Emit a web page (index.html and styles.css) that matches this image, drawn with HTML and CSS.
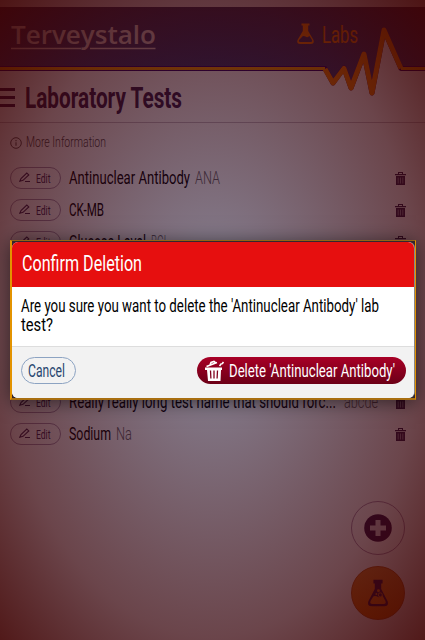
FILE: index.html
```html
<!DOCTYPE html>
<html lang="en">
<head>
<meta charset="utf-8">
<title>Laboratory Tests</title>
<link rel="stylesheet" href="styles.css">
</head>
<body>
<svg width="0" height="0" class="defs">
  <symbol id="pencil" viewBox="0 0 12 12"><path d="M.8 9.200 2 6.500 7.800 1 9.800 2.900 4 8.300 .8 9.200ZM6 9.500H11" fill="none" stroke="#3c2a58" stroke-width="1.100"/></symbol>
  <symbol id="trash" viewBox="0 0 11 13"><path d="M0 2h11v1.300H0zM3 0h5v2H7V1H4v1H3z" fill="#33204c"/><path d="M1 4h9v9H1z" fill="#33204c"/><path d="M3.200 5.500v6M5.500 5.500v6M7.800 5.500v6" stroke="#9a8ea6" stroke-width=".9"/></symbol>
</svg>
<div class="page">
  <header class="top">
    <svg class="banner" viewBox="0 0 425 100">
      <defs><linearGradient id="hg" x1="0" y1="0" x2="0" y2="1"><stop offset="0" stop-color="#383058"/><stop offset="1" stop-color="#344080"/></linearGradient></defs>
      <path d="M0 7H425V69H401L384 30 372 93 364 54 351 88 344 68 333 83 325 69H0Z" fill="url(#hg)"/>
      <path class="pulse-edge" d="M-5 68.500H325L333 83 344 68 351 88 364 54 372 93 384 30 401 68.500H430"/>
      <path class="pulse-line" d="M-5 68.500H325"/>
      <path class="pulse" d="M325 69 333 83 344 68.500 351 88 364 54 372 93 384 30 401 68.500"/>
      <path class="pulse-line" d="M401 68.500H430"/>
      <text class="logo" x="11" y="43.500" textLength="145" lengthAdjust="spacingAndGlyphs">Terveystalo</text>
      <path d="M11 48.500H81M90 48.500H155.500" stroke="#d9c8c8" stroke-width="1.300"/>
      <path d="M301.500 23.500h8v2h-1.300v5.500l5.300 9q1.300 4-3 4h-10q-4.300 0-3-4l5.300-9v-5.500h-1.300zM299 40q-.8 2 1 2h11q1.800 0 1-2l-2.500-4q-2 2-4 .5-3-1.500-4 1z" fill="#f47c00" fill-rule="evenodd"/>
      <text class="labs" x="322" y="43" textLength="36" lengthAdjust="spacingAndGlyphs">Labs</text>
    </svg>
  </header>
  <div class="title">
    <div class="burger"><i></i><i></i><i></i></div>
    <svg class="h1"><text x="0" y="25" textLength="157" lengthAdjust="spacingAndGlyphs">Laboratory Tests</text></svg>
  </div>
  <div class="more">
    <svg width="12" height="12" viewBox="0 0 12 12"><circle cx="6" cy="6" r="5.300" fill="none" stroke="#555" stroke-width="1"/><path d="M6 5.200v3.600M6 3v1.200" stroke="#555" stroke-width="1.100"/></svg>
    <svg class="t" width="80"><text x="0" y="14" textLength="80" lengthAdjust="spacingAndGlyphs">More Information</text></svg>
  </div>
  <ul class="list">
    <li><span class="edit"><svg class="pen"><use href="#pencil"/></svg><svg class="t" width="15"><text x="0" y="15" textLength="14.500" lengthAdjust="spacingAndGlyphs">Edit</text></svg></span>
      <svg class="t name" width="121"><text x="0" y="16" textLength="121" lengthAdjust="spacingAndGlyphs">Antinuclear Antibody</text></svg><svg class="t abbr" width="25"><text x="0" y="16" textLength="25" lengthAdjust="spacingAndGlyphs">ANA</text></svg><svg class="bin"><use href="#trash"/></svg></li>
    <li><span class="edit"><svg class="pen"><use href="#pencil"/></svg><svg class="t" width="15"><text x="0" y="15" textLength="14.500" lengthAdjust="spacingAndGlyphs">Edit</text></svg></span>
      <svg class="t name" width="35"><text x="0" y="16" textLength="35" lengthAdjust="spacingAndGlyphs">CK-MB</text></svg><svg class="bin"><use href="#trash"/></svg></li>
    <li><span class="edit"><svg class="pen"><use href="#pencil"/></svg><svg class="t" width="15"><text x="0" y="15" textLength="14.500" lengthAdjust="spacingAndGlyphs">Edit</text></svg></span>
      <svg class="t name" width="77"><text x="0" y="16" textLength="77" lengthAdjust="spacingAndGlyphs">Glucose Level</text></svg><svg class="t abbr" width="18"><text x="0" y="16" textLength="18" lengthAdjust="spacingAndGlyphs">BGL</text></svg><svg class="bin"><use href="#trash"/></svg></li>
    <li class="later"><span class="edit"><svg class="pen"><use href="#pencil"/></svg><svg class="t" width="15"><text x="0" y="15" textLength="14.500" lengthAdjust="spacingAndGlyphs">Edit</text></svg></span>
      <svg class="t name" width="268"><text x="0" y="16" textLength="267" lengthAdjust="spacingAndGlyphs">Really really long test name that should forc...</text></svg><svg class="t abbr wide" width="34"><text x="0" y="16" textLength="34" lengthAdjust="spacingAndGlyphs">abcde</text></svg><svg class="bin"><use href="#trash"/></svg></li>
    <li><span class="edit"><svg class="pen"><use href="#pencil"/></svg><svg class="t" width="15"><text x="0" y="15" textLength="14.500" lengthAdjust="spacingAndGlyphs">Edit</text></svg></span>
      <svg class="t name" width="42"><text x="0" y="16" textLength="42" lengthAdjust="spacingAndGlyphs">Sodium</text></svg><svg class="t abbr" width="16"><text x="0" y="16" textLength="16" lengthAdjust="spacingAndGlyphs">Na</text></svg><svg class="bin"><use href="#trash"/></svg></li>
  </ul>
  <div class="fabs">
    <div class="fab"><svg width="28" height="28" viewBox="0 0 28 28"><circle cx="14" cy="14" r="13.800" fill="#33184c"/><path d="M14 6v16M6 14h16" stroke="#d6ccd8" stroke-width="5"/></svg></div>
    <div class="fab orange"><svg width="22" height="29" viewBox="0 0 24 30"><path d="M7 0h10v4h-1.500v6l7 13.500q2 5.500-4 5.500h-13q-6 0-4-5.500l7-13.500v-6H7zM4 23q-1.500 3.500 2 3.500h12q3.500 0 2-3.500l-3.300-6q-3 3.500-6 1-3-1-4 .5z" fill="#33184c" fill-rule="evenodd"/><circle cx="14.500" cy="16.500" r="2.200" fill="#33184c" stroke="#d87a20"/><circle cx="12.500" cy="12" r="1.600" fill="#d87a20"/><circle cx="10.200" cy="15.500" r="1" fill="#d87a20"/></svg></div>
  </div>
</div>
<div class="overlay">
  <div class="focus">
    <div class="dialog">
      <div class="head"><svg class="t" width="120"><text x="0" y="15" textLength="120" lengthAdjust="spacingAndGlyphs">Confirm Deletion</text></svg></div>
      <div class="body">
        <svg class="line" width="358"><text x="0" y="15" textLength="358" lengthAdjust="spacingAndGlyphs">Are you sure you want to delete the 'Antinuclear Antibody' lab</text></svg>
        <svg class="line" width="32"><text x="0" y="15" textLength="32" lengthAdjust="spacingAndGlyphs">test?</text></svg>
      </div>
      <div class="foot">
        <button class="cancel"><svg class="t" width="37"><text x="0" y="15" textLength="37" lengthAdjust="spacingAndGlyphs">Cancel</text></svg></button>
        <button class="delete">
          <svg class="icon" width="20" height="20" viewBox="0 0 20 20"><path d="M0 6.500h17v2.500h-1L15.500 20H3L2 9H0z" fill="#fff"/><path d="M5.500 9.500l.4 8M9 9.500v8M12.500 9.500l-.4 8" stroke="#80001d" stroke-width="1.300"/><path d="M1.500 5.500 12 1.500M5 4 6 1.500l3-1 1.500 1.200M14.500 5l2-2.500M17 3l1.500-2" stroke="#fff" stroke-width="1.600" fill="none"/></svg>
          <svg class="t" width="166"><text x="0" y="15" textLength="166" lengthAdjust="spacingAndGlyphs">Delete 'Antinuclear Antibody'</text></svg>
        </button>
      </div>
    </div>
  </div>
</div>
</body>
</html>
```
FILE: styles.css
```css
* { box-sizing: border-box; }
body { margin: 0; width: 425px; height: 640px; overflow: hidden; font-family: Roboto, "Liberation Sans", sans-serif; }
svg { display: block; overflow: visible; flex: none; }
.defs { position: absolute; }
.page { height: 640px; background: #fff; display: flex; flex-direction: column; }
.top { height: 72px; background: linear-gradient(#d8ccd0 7px, #fff 7px); }
.banner { width: 425px; height: 100px; }
.pulse-edge { fill: none; stroke: #2a0070; stroke-width: 5; stroke-linejoin: round; }
.pulse-line { fill: none; stroke: #f9a000; stroke-width: 3; }
.pulse { fill: none; stroke: #f98700; stroke-width: 5; stroke-linejoin: round; }
.logo { font: 600 26px "Open Sans", sans-serif; fill: #d9c8c8; }
.labs { font-size: 24px; fill: #f47c00; }
.title { height: 51px; display: flex; border-bottom: 1px solid #c4bcc6; padding-top: 11px; }
.burger { width: 15px; padding-top: 5px; display: flex; flex-direction: column; gap: 5px; }
.burger i { height: 3px; background: #33184c; }
.h1 { width: 160px; height: 30px; margin-left: 10px; font-weight: 700; font-size: 29px; fill: #33204c; }
.more { height: 39px; display: flex; align-items: center; padding-left: 10px; gap: 4px; font-size: 15px; font-weight: 300; fill: #444; }
.t { height: 20px; }
.list { list-style: none; margin: 0; padding: 0 19px 0 10px; }
.list li { height: 32px; display: flex; align-items: center; }
.list .later { margin-top: 128px; }
.edit { width: 51px; height: 22px; border: 1px solid #a596b2; border-radius: 11px; display: flex; align-items: center; padding-left: 8px; gap: 5px; fill: #3c2a58; font-size: 13px; flex: none; }
.pen { width: 12px; height: 12px; }
.name { margin-left: 8px; font-size: 18px; fill: #000; }
.abbr { margin-left: 5px; font-size: 18px; fill: #666; font-weight: 300; }
.abbr.wide { margin-left: 7px; }
.bin { width: 11px; height: 13px; margin-left: auto; }
.fabs { margin: 51px 20px 0 auto; display: flex; flex-direction: column; gap: 11px; }
.fab { width: 54px; height: 54px; border: 1px solid #a890b0; border-radius: 50%; display: flex; align-items: center; justify-content: center; }
.fab.orange { background: linear-gradient(#e08a30, #e87400); border-color: #c06010; }
.overlay { position: absolute; inset: 0; display: flex; flex-direction: column; align-items: center; justify-content: center; background: radial-gradient(ellipse farthest-corner, rgba(10, 5, 45, .48), rgba(52, 0, 8, .73) 70%, rgba(62, 0, 0, .9)); }
.focus { width: 406px; height: 160px; border: 1px solid #e39300; border-top-color: #936515; border-left-width: 2px; border-bottom: 2px solid #a86e10; box-shadow: 0 2px 18px rgba(0, 0, 0, .55); background: #33262e; margin-left: 1px; }
.dialog { width: 402px; height: 156px; margin-top: 1px; border-radius: 6px; overflow: hidden; background: #fff; display: flex; flex-direction: column; box-shadow: 1px 0 0 #888; }
.head { height: 45px; background: #e60f0f; padding: 14px 0 0 10px; font-size: 22px; fill: #fff; }
.body { height: 59px; padding: 10px 0 0 9px; font-size: 18px; fill: #000; }
.line { height: 19px; }
.foot { flex: 1; background: #f2f2f2; border-top: 1px solid #ddd; padding: 10px 8.500px 0 8.500px; display: flex; justify-content: space-between; font-size: 18px; }
button { font: inherit; height: 27px; border-radius: 14px; display: flex; }
.cancel { width: 55px; border: 1px solid #8ca3c2; background: transparent; padding: 4px 0 0 6.500px; fill: #28466f; }
.delete { width: 209px; border: 0; background: linear-gradient(#a80026, #6c0017); padding: 5px 0 0 8.500px; gap: 4px; fill: #fff; }
.delete .icon { margin-top: -1px; }
```
